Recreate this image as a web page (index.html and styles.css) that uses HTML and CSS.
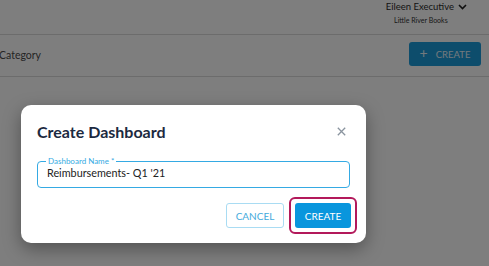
FILE: index.html
```html
<!DOCTYPE html>
<html>
<head>
<meta charset="utf-8">
<link rel="stylesheet" href="styles.css">
</head>
<body>
<div class="page">
  <header class="topbar">
    <div class="user">
      <div class="user-name">Eileen Executive
        <svg class="chev" width="9" height="6" viewBox="0 0 9 6"><path d="M1 1 L4.5 4.5 L8 1" fill="none" stroke="#1f1f1f" stroke-width="1.6"/></svg>
      </div>
      <div class="user-org">Little River Books</div>
    </div>
  </header>
  <div class="toolbar">
    <span class="crumb">Category</span>
    <button class="btn-top"><span class="plus">+</span>CREATE</button>
  </div>
</div>
<div class="overlay"></div>
<div class="dialog">
  <div class="dialog-head">
    <h1 class="dialog-title">Create Dashboard</h1>
    <svg class="close" width="9" height="9" viewBox="0 0 9 9"><path d="M0.8 0.8 L8.2 8.2 M8.2 0.8 L0.8 8.2" stroke="#8a949f" stroke-width="1.3"/></svg>
  </div>
  <fieldset class="field">
    <legend class="field-label">Dashboard Name *</legend>
    <div class="field-value">Reimbursements- Q1 '21</div>
  </fieldset>
  <div class="actions">
    <button class="btn-cancel">CANCEL</button>
    <div class="highlight"><button class="btn-create">CREATE</button></div>
  </div>
</div>
</body>
</html>
```
FILE: styles.css
```css
* { box-sizing: border-box; }
html, body { margin: 0; padding: 0; }
body {
  width: 489px;
  height: 266px;
  overflow: hidden;
  font-family: Lato, "Noto Sans", sans-serif;
  background: #fdfdfd;
  position: relative;
}
.page { width: 489px; }
.topbar {
  height: 35px;
  border-bottom: 1px solid #d8d8d8;
  display: flex;
  justify-content: flex-end;
  padding-right: 22px;
}
.user {
  display: flex;
  flex-direction: column;
  align-items: center;
}
.user-name {
  font-size: 9.5px;
  color: #2a2a2a;
  line-height: 12px;
  display: flex;
  align-items: center;
  gap: 4px;
  margin-top: 1px;
}
.user-org {
  font-size: 7px;
  color: #333;
  margin-top: 3px;
  margin-right: 11px;
}
.toolbar {
  height: 42px;
  border-bottom: 1px solid #d8d8d8;
  display: flex;
  align-items: center;
  justify-content: space-between;
  padding-right: 8px;
}
.crumb {
  font-size: 10.5px;
  color: #4a4a4a;
  margin-left: -1px;
  margin-top: -1px;
}
.btn-top {
  width: 72px;
  height: 24px;
  border: none;
  border-radius: 3px;
  background: #1a9ad8;
  color: #e6f3fa;
  font-family: inherit;
  font-size: 9.5px;
  display: flex;
  align-items: center;
  justify-content: center;
  gap: 8px;
  padding: 0;
  margin-top: -3px;
}
.plus { font-size: 14px; line-height: 1; margin-top: -2px; }
.overlay {
  position: absolute;
  inset: 0;
  background: rgba(0, 0, 0, 0.5);
}
.dialog {
  position: absolute;
  left: 21px;
  top: 105px;
  width: 345px;
  height: 138px;
  background: #fff;
  border-radius: 10px;
  box-shadow: 0 6px 18px rgba(0, 0, 0, 0.35);
  padding: 0 15px 0 16px;
}
.dialog-head {
  display: flex;
  justify-content: space-between;
  align-items: center;
  height: 52px;
}
.dialog-title {
  margin: 0;
  font-size: 16px;
  font-weight: 700;
  color: #1c2a3f;
}
.close { margin-right: 5px; }
.field {
  margin: 0;
  height: 31px;
  border: 1.5px solid #35aae3;
  border-radius: 4px;
  padding: 0 9px;
  width: 313px;
}
.field-label {
  font-size: 8px;
  color: #35aae3;
  padding: 0 2px;
  margin-left: -1px;
  line-height: 9px;
}
.field-value {
  font-size: 10.8px;
  color: #222;
  line-height: 16px;
  margin-top: -1px;
}
.actions {
  display: flex;
  justify-content: flex-end;
  align-items: center;
  margin-top: 9px;
  width: 320px;
  gap: 5px;
}
.btn-cancel {
  width: 58px;
  height: 25px;
  border: 1px solid #a9dcf3;
  border-radius: 3px;
  background: #fff;
  color: #43aadc;
  font-family: inherit;
  font-size: 10px;
  padding: 0;
}
.highlight {
  border: 2px solid #b3195b;
  border-radius: 6px;
  padding: 4px;
}
.btn-create {
  display: block;
  width: 56px;
  height: 25px;
  border: none;
  border-radius: 3px;
  background: #0996dd;
  color: #fff;
  font-family: inherit;
  font-size: 10px;
  padding: 0;
}
```
